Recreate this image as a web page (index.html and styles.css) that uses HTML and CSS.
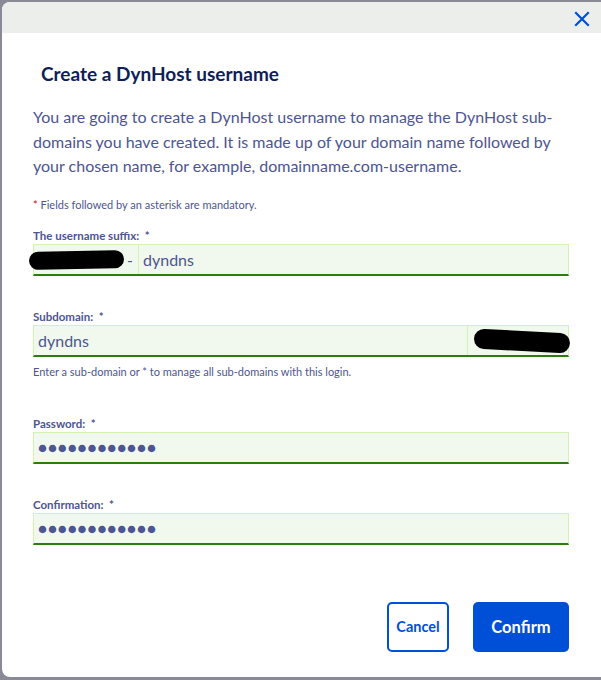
FILE: index.html
```html
<!DOCTYPE html>
<html lang="en">
<head>
<meta charset="utf-8">
<title>Create a DynHost username</title>
<link rel="stylesheet" href="styles.css">
</head>
<body>
<div class="dialog">
  <div class="dialog-head">
    <button class="close" aria-label="Close">
      <svg width="16" height="16" viewBox="0 0 16 16"><path d="M2 2 L14 14 M14 2 L2 14" stroke="#0050d7" stroke-width="2.2" stroke-linecap="square" fill="none"/></svg>
    </button>
  </div>
  <div class="dialog-body">
    <h2 class="title">Create a DynHost username</h2>
    <p class="intro">You are going to create a DynHost username to manage the DynHost sub-domains you have created. It is made up of your domain name followed by your chosen name, for example, domainname.com-username.</p>
    <p class="note"><span class="req">*</span> Fields followed by an asterisk are mandatory.</p>

    <div class="field">
      <label class="label">The username suffix:&nbsp; *</label>
      <div class="input-group">
        <div class="addon addon-left"><span class="redact redact-1"></span><span class="dash">-</span></div>
        <input class="input" type="text" value="dyndns">
      </div>
    </div>

    <div class="field">
      <label class="label">Subdomain:&nbsp; *</label>
      <div class="input-group">
        <input class="input input-sub" type="text" value="dyndns">
        <div class="addon addon-right"><span class="redact redact-2"></span></div>
      </div>
      <p class="help">Enter a sub-domain or * to manage all sub-domains with this login.</p>
    </div>

    <div class="field field-pw">
      <label class="label">Password:&nbsp; *</label>
      <div class="input-group">
        <div class="input dots">●●●●●●●●●●●●</div>
      </div>
    </div>

    <div class="field field-pw2">
      <label class="label">Confirmation:&nbsp; *</label>
      <div class="input-group">
        <div class="input dots">●●●●●●●●●●●●</div>
      </div>
    </div>

    <div class="actions">
      <button class="btn btn-cancel">Cancel</button>
      <button class="btn btn-confirm">Confirm</button>
    </div>
  </div>
</div>
</body>
</html>
```

FILE: styles.css
```css
html, body {
  margin: 0;
  padding: 0;
  background: #8a8a96;
  height: 680px;
  overflow: hidden;
}
body {
  padding: 2px 0 0 2px;
  box-sizing: border-box;
  font-family: "Lato", "Noto Sans", sans-serif;
}
.dialog {
  width: 610px;
  height: 675px;
  background: #fff;
  border-radius: 8px;
  overflow: hidden;
}
.dialog-head {
  height: 31px;
  background: #eceeec;
  display: flex;
  justify-content: flex-end;
  align-items: center;
}
.close {
  border: 0;
  background: none;
  padding: 0;
  margin-right: 22px;
  margin-top: 2px;
  width: 16px;
  height: 16px;
  display: flex;
}
.dialog-body {
  padding: 0 30px 0 31px;
  width: 536px;
}
.title {
  margin: 29px 0 0 8px;
  font-size: 19px;
  line-height: 24px;
  font-weight: 700;
  color: #0f1e57;
}
.intro {
  margin: 19px 0 0;
  font-size: 16px;
  line-height: 24.5px;
  color: #4d5592;
}
.note {
  margin: 19px 0 0;
  font-size: 11px;
  line-height: 14px;
  color: #4d5592;
}
.req { color: #d0021b; }
.field { margin-top: 17px; }
.field + .field { margin-top: 34px; }
.field-pw { margin-top: 38px !important; }
.field-pw2 { margin-top: 34px !important; }
.label {
  display: block;
  font-size: 11.5px;
  line-height: 14px;
  font-weight: 700;
  color: #4d5592;
  margin-bottom: 1px;
}
.input-group {
  display: flex;
  height: 32px;
  box-sizing: border-box;
  background: #f1f9ee;
  border: 1px solid #d3f3b3;
  border-bottom: 2px solid #2d7c0e;
}
.input {
  flex: 1;
  min-width: 0;
  border: 0;
  background: transparent;
  font: inherit;
  font-size: 16px;
  color: #4d5592;
  padding: 0 4px;
  outline: none;
}
.input-sub { padding-left: 4px; }
.addon {
  display: flex;
  align-items: center;
  position: relative;
}
.addon-left {
  width: 105px;
  border-right: 1px solid #d3f3b3;
  justify-content: flex-end;
  padding-right: 5px;
  box-sizing: border-box;
}
.addon-right {
  width: 100px;
  border-left: 1px solid #d3f3b3;
}
.dash {
  color: #4d5592;
  font-size: 16px;
}
.redact {
  position: absolute;
  background: #000;
  border-radius: 12px;
}
.redact-1 {
  left: -5px;
  top: 6px;
  width: 95px;
  height: 18px;
  transform: rotate(-1deg);
}
.redact-2 {
  left: 6px;
  top: 5px;
  width: 96px;
  height: 20px;
  transform: rotate(3deg);
}
.help {
  margin: 8px 0 0;
  font-size: 11px;
  line-height: 14px;
  color: #4d5592;
}
.dots {
  display: flex;
  align-items: center;
  font-size: 15px;
  letter-spacing: 0.9px;
  padding-left: 4px;
}
.actions {
  display: flex;
  justify-content: flex-end;
  gap: 24px;
  margin-top: 57px;
}
.btn {
  height: 50px;
  border-radius: 5px;
  font-family: inherit;
  font-weight: 700;
  box-sizing: border-box;
}
.btn-cancel {
  width: 62px;
  background: #fff;
  border: 2px solid #0050d7;
  color: #0050d7;
  font-size: 14.5px;
  padding: 0;
}
.btn-confirm {
  width: 96px;
  background: #0050d7;
  border: 0;
  color: #fff;
  font-size: 16.5px;
}
```
